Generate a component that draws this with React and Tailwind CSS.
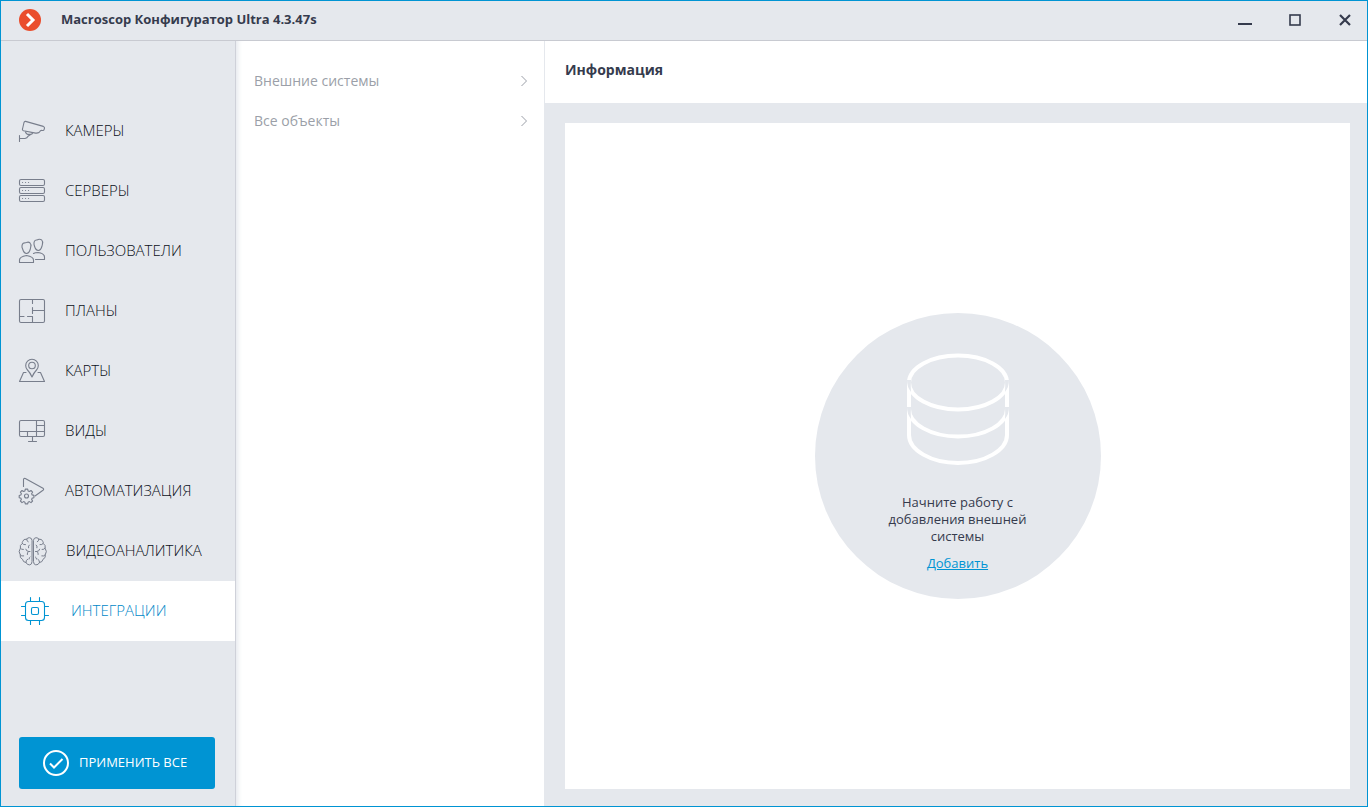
import clsx from "clsx";

const IconBase = ({ className = "w-[30px]", viewBox = "0 0 30 30", children }) => (
  <svg
    className={clsx("h-[30px] shrink-0", className)}
    viewBox={viewBox}
    fill="none"
    stroke="currentColor"
    strokeWidth="1.1"
    strokeLinecap="round"
    strokeLinejoin="round"
    aria-hidden="true"
  >
    {children}
  </svg>
);

const CameraIcon = () => (
  <IconBase>
    <path d="M8.6 5.4 26.3 10.4q1.5.5 1.2 1.7l-.5 1.7q-1 1-2.6.6-1 0-1.6 1.2-.8 1.5-2.2 1.3-1.4.3-2 .2L6.5 14.7q-1.4-.4-1-1.7L7 6.5Q7.4 5.1 8.6 5.4Z" />
    <path d="M2.5 19.5v6M2.5 22.5h5.5q2.2-.2 3-2.2l2.6-1.8M8.5 16q.5 1.7 2.3 2.4h2.8q1.6 0 2-1.4" />
  </IconBase>
);

const ServersIcon = () => (
  <IconBase>
    <rect x="2.5" y="3.5" width="25" height="6" rx="1.5" />
    <rect x="2.5" y="11.5" width="25" height="6" rx="1.5" />
    <rect x="2.5" y="19.5" width="25" height="6" rx="1.5" />
    <path d="M5.5 6.5h.1M8.5 6.5h.1M11.5 6.5h.1M5.5 14.5h.1M8.5 14.5h.1M11.5 14.5h.1M5.5 22.5h.1M8.5 22.5h.1M11.5 22.5h.1" />
  </IconBase>
);

const UsersIcon = () => (
  <IconBase>
    <path d="M9.5 6.5q2-.8 3.4.3 1.6 1.4.8 4.4l-.5 2.3q-1.2 3.8-3.7 4-2.6-.2-3.7-4L5 11.2q-.3-3.9 2.5-4.3Z" />
    <path d="M2.5 26.5V24q0-3.3 7-4.5 7 1.2 7 4.5v2.5Z" />
    <path d="M21 3.600q2-.8 3.600.3 1.500 1.400.8 4.400l-.5 2.200q-1.200 3.800-3.600 4-2.600-.2-3.700-4l-.6-2.200q-.3-3.900 2.400-4.300Z" />
    <path d="M16.5 17.5q1.5-1 4.5-1 6.5 1 6.5 4.5v2.5h-9" />
  </IconBase>
);

const PlansIcon = () => (
  <IconBase>
    <rect x="2.5" y="3.5" width="25" height="23" rx="1.5" />
    <path d="M15.5 3.5v4M15.5 11.5v6M15.5 14.5h12M2.5 20.5H7M10.5 20.5h5v6" />
  </IconBase>
);

const MapsIcon = () => (
  <IconBase>
    <path d="M15 21q-2-4.5-4.500-7a6.3 6.3 0 1 1 9 0Q17 16.5 15 21Z" />
    <circle cx="15" cy="9.5" r="3.3" />
    <path d="M9 16.5H6.5l-4 9h25l-4-9H21" />
  </IconBase>
);

const ViewsIcon = () => (
  <IconBase>
    <rect x="2.5" y="4.5" width="25" height="16" rx="1.5" />
    <path d="M19.5 4.5v16M19.5 9.5h8M2.5 15.5h25M10.5 15.5v5M15.5 20.5v5M11.5 25.5h8" />
  </IconBase>
);

const AutomationIcon = () => (
  <IconBase>
    <path d="M6.5 10.5v-7q.3-1.5 1.8-1L26 12.3q1.3 1 0 2L18 20" />
    <circle cx="9.5" cy="20" r="2" />
    <path d="m8.300 13.100 2.400 0 .4 1.800 1.300.6 1.600-1 1.600 1.600-1 1.600.6 1.200 1.700.5v2.300l-1.700.4-.6 1.300 1 1.600-1.600 1.600-1.600-1-1.300.6-.4 1.700H8.300l-.4-1.700-1.300-.6-1.600 1L3.400 25l1-1.600-.6-1.300-1.600-.4v-2.300l1.600-.5.6-1.200-1-1.600L5 14.500l1.600 1 1.300-.6Z" />
  </IconBase>
);

const BrainHalf = () => (
  <g strokeWidth="1">
    <path d="M15 4q-.3-2.200-2.500-2.300-2.300 0-2.800 1.500Q6.500 2.600 5.600 5.600 5 6.500 5.300 7.500 2.500 9 3.400 12.200 1 15.500 3.200 18.700 2.500 22 5.500 23.300 6 26.300 9 26.500q1 2.500 3.700 2.400Q15 28.500 15 26Z" />
    <path d="M9.700 3.200q-.2 2 1.500 2.600M5.300 7.500q1.200 1.600 3.200 1.200M12.300 9q-1.300.8-.8 2.800M3.400 12.200q1 1.600 3 1.300M11.500 15.500q-2.200 0-2.700-2.300M13 15.500h-1.500q-1.500 1.200-1.200 3M3.200 18.700q1.300 2 3.500 1.300M13 21q-1 .5-1 2M9 26.500q-.3-2.500 1.600-3.300" />
  </g>
);

const BrainIcon = () => (
  <IconBase className="w-[31px]" viewBox="0 0 31 30">
    <BrainHalf />
    <g transform="translate(31.5 0) scale(-1 1)">
      <BrainHalf />
    </g>
  </IconBase>
);

const IntegrationsIcon = () => (
  <IconBase>
    <rect x="5.5" y="5.5" width="19" height="19" rx="3" />
    <rect x="11.5" y="11.5" width="7" height="7" rx="1.5" />
    <path d="M10.5 1.5v4M19.5 1.5v4M10.5 24.5v4M19.5 24.5v4M1.5 10.5h4M1.5 19.5h4M24.5 10.5h4M24.5 19.5h4" />
  </IconBase>
);

const DatabaseIcon = () => (
  <svg
    className="h-28 w-[102px]"
    viewBox="0 0 102 112"
    fill="none"
    stroke="#fff"
    strokeWidth="4"
    aria-hidden="true"
  >
    <path d="M2 28v54c0 15 22 28 49 28s49-13 49-28V28" />
    <ellipse cx="51" cy="29.5" rx="49" ry="27" />
    <path d="M2 56c0 15 22 27.5 49 27.5s49-12.5 49-27.5" />
    {/* seams where the rings cross the walls */}
    <g fill="#e5e8ed" stroke="none">
      <path d="M0 27h4q-.5 6 0 12Q0 34 0 27Z" />
      <path d="M102 27h-4q.5 6 0 12 4-5 4-12Z" />
      <path d="M0 54h4q-.5 6 0 12Q0 61 0 54Z" />
      <path d="M102 54h-4q.5 6 0 12 4-5 4-12Z" />
    </g>
  </svg>
);

const menu = [
  { title: "КАМЕРЫ", icon: CameraIcon },
  { title: "СЕРВЕРЫ", icon: ServersIcon },
  { title: "ПОЛЬЗОВАТЕЛИ", icon: UsersIcon },
  { title: "ПЛАНЫ", icon: PlansIcon },
  { title: "КАРТЫ", icon: MapsIcon },
  { title: "ВИДЫ", icon: ViewsIcon },
  { title: "АВТОМАТИЗАЦИЯ", icon: AutomationIcon },
  { title: "ВИДЕОАНАЛИТИКА", icon: BrainIcon },
  { title: "ИНТЕГРАЦИИ", icon: IntegrationsIcon, active: true },
];

const sections = ["Внешние системы", "Все объекты"];

const TitleBar = () => (
  <header className="flex h-10 shrink-0 items-center border-b border-[#c8cad1] bg-[#e5e8ed] pr-[7px] pb-0.5 pl-[18px]">
    <svg className="size-[22px]" viewBox="0 0 22 22" aria-hidden="true">
      <circle cx="11" cy="11" r="11" fill="#ea4e2d" />
      <path d="m8 5 6 6-6 6" fill="none" stroke="#fff" strokeWidth="3" />
    </svg>
    <h1 className="flex-1 pl-5 text-[13px] font-bold">
      Macroscop Конфигуратор Ultra 4.3.47s
    </h1>
    <div className="flex gap-5">
      <button type="button" aria-label="Свернуть" className="p-2">
        <svg className="size-[14px]" viewBox="0 0 14 14">
          <path d="M0 11h14" stroke="currentColor" strokeWidth="2" />
        </svg>
      </button>
      <button type="button" aria-label="Развернуть" className="p-2">
        <svg className="size-[14px]" viewBox="0 0 14 14">
          <rect x="2" y="2" width="10" height="10" fill="none" stroke="currentColor" strokeWidth="1.6" />
        </svg>
      </button>
      <button type="button" aria-label="Закрыть" className="p-2">
        <svg className="size-[14px]" viewBox="0 0 14 14">
          <path d="m2 2 10 10M12 2 2 12" stroke="currentColor" strokeWidth="2.2" />
        </svg>
      </button>
    </div>
  </header>
);

const Sidebar = () => (
  <aside className="flex w-[235px] shrink-0 flex-col border-r border-[#cfd1d9] bg-[#e5e8ed] pt-[60px]">
    <nav>
      {menu.map(({ title, icon: Icon, active }) => (
        <a
          key={title}
          href="#"
          className={clsx(
            "flex h-[60px] items-center text-[15px] font-light",
            active
              ? "gap-[21px] bg-white pl-[19px] text-[#0088c8]"
              : "gap-[18px] pl-4 text-[#0c1020]",
          )}
        >
          <span className={active ? "text-[#0094d3]" : "text-[#787e8c]"}>
            <Icon />
          </span>
          <span className="pb-0.5">{title}</span>
        </a>
      ))}
    </nav>
    <button
      type="button"
      className="mt-auto mr-5 mb-[17px] ml-[18px] flex h-[52px] items-center gap-[10px] rounded-[3px] bg-[#0094d3] pl-6 text-[13px] text-white"
    >
      <svg
        className="size-[26px]"
        viewBox="0 0 26 26"
        fill="none"
        stroke="currentColor"
        strokeWidth="2"
        aria-hidden="true"
      >
        <circle cx="13" cy="13" r="12" />
        <path d="m7 13.5 4 4 8.5-8.5" />
      </svg>
      ПРИМЕНИТЬ ВСЕ
    </button>
  </aside>
);

const SectionList = () => (
  <div className="w-[309px] shrink-0 border-r border-[#e5e8ed] bg-white shadow-[inset_6px_0_5px_-4px_#e5e8ed]">
    <nav className="pt-5">
      {sections.map((title) => (
        <a
          key={title}
          href="#"
          className="flex h-10 items-center justify-between pr-4 pl-[18px] text-sm text-[#9b9fa8]"
        >
          {title}
          <svg className="h-3 w-2" viewBox="0 0 8 12" fill="none" stroke="currentColor" aria-hidden="true">
            <path d="m1.500 1 5 5-5 5" />
          </svg>
        </a>
      ))}
    </nav>
  </div>
);

const EmptyState = () => (
  <div className="flex size-[286px] flex-col items-center rounded-full bg-[#e5e8ed] pt-10 text-[13px]">
    <DatabaseIcon />
    <p className="mt-[29px] w-40 text-center leading-[17px]">
      Начните работу с добавления внешней системы
    </p>
    <a href="#" className="mt-[10px] leading-[17px] text-[#0094d3] underline">
      Добавить
    </a>
  </div>
);

const App = () => {
  return (
    <div className="flex min-h-screen flex-col border border-[#0094d3] bg-[#e5e8ed] font-['Open_Sans','Noto_Sans',sans-serif] text-[#353b4d]">
      <TitleBar />
      <div className="flex flex-1">
        <Sidebar />
        <SectionList />
        <main className="flex flex-1 flex-col">
          <h2 className="flex h-[62px] items-center bg-white px-5 pb-1 text-sm font-bold">
            Информация
          </h2>
          <section className="mt-5 mr-[17px] mb-[17px] ml-5 flex flex-1 items-center justify-center bg-white">
            <EmptyState />
          </section>
        </main>
      </div>
    </div>
  );
};

export default App;
